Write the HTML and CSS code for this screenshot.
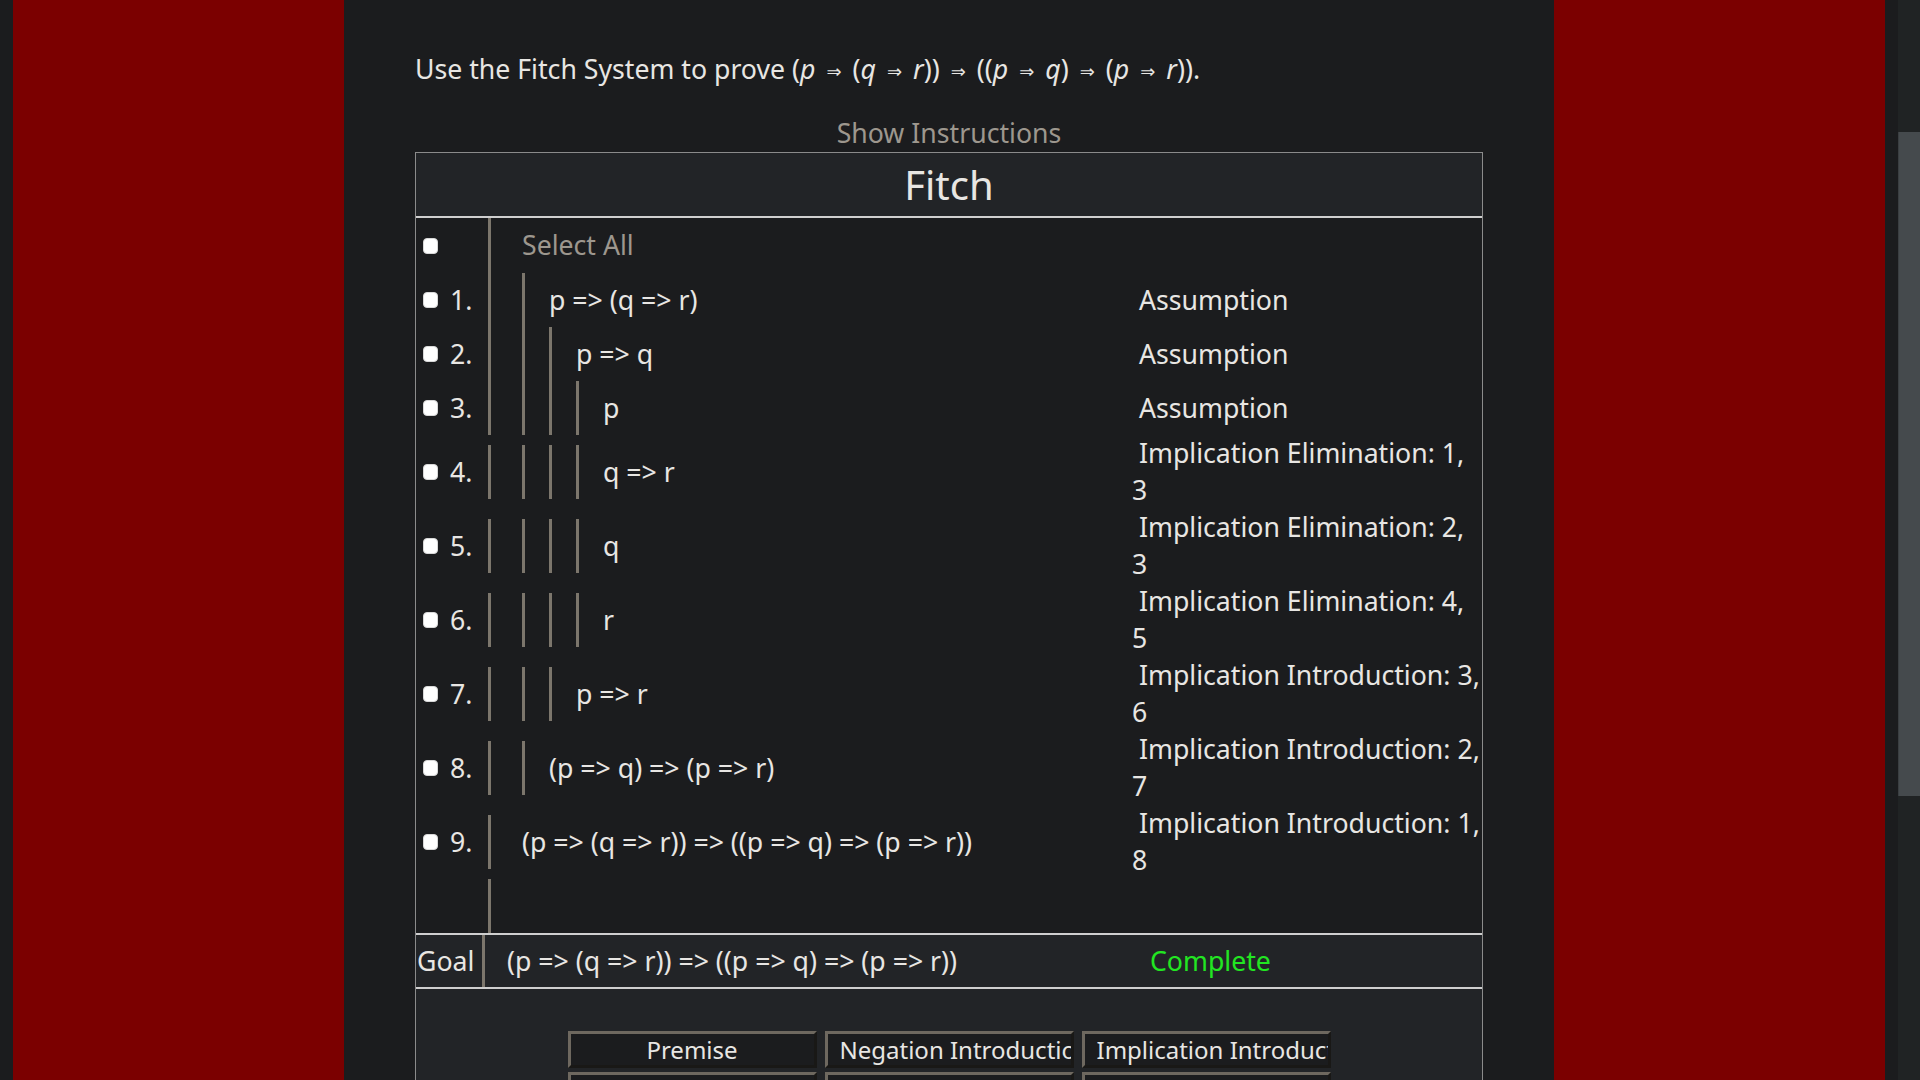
FILE: index.html
```html
<!DOCTYPE html>
<html lang="en">
<head>
<meta charset="utf-8">
<title>Fitch</title>
<link rel="stylesheet" href="styles.css">
</head>
<body>
<div class="page">
  <div class="side"></div>
  <main class="column">
    <p class="prompt">Use the Fitch System to prove (<i>p</i><span class="imp">⇒</span>(<i>q</i><span class="imp">⇒</span><i>r</i>))<span class="imp">⇒</span>((<i>p</i><span class="imp">⇒</span><i>q</i>)<span class="imp">⇒</span>(<i>p</i><span class="imp">⇒</span><i>r</i>)).</p>
    <div class="show">Show Instructions</div>
    <section class="fitch">
      <div class="fitch-head">Fitch</div>
      <div class="proof">
        <div class="line line-all">
          <div class="num"><input type="checkbox" class="cb"></div>
          <div class="formula"><span class="bar bar0"></span><span class="txt muted">Select All</span></div>
          <div class="rule"></div>
        </div>
        <div class="line">
          <div class="num"><input type="checkbox" class="cb"><span>1.</span></div>
          <div class="formula"><span class="bar bar0"></span><span class="bar"></span><span class="txt">p =&gt; (q =&gt; r)</span></div>
          <div class="rule"> Assumption</div>
        </div>
        <div class="line">
          <div class="num"><input type="checkbox" class="cb"><span>2.</span></div>
          <div class="formula"><span class="bar bar0"></span><span class="bar"></span><span class="bar"></span><span class="txt">p =&gt; q</span></div>
          <div class="rule"> Assumption</div>
        </div>
        <div class="line">
          <div class="num"><input type="checkbox" class="cb"><span>3.</span></div>
          <div class="formula"><span class="bar bar0"></span><span class="bar"></span><span class="bar"></span><span class="bar"></span><span class="txt">p</span></div>
          <div class="rule"> Assumption</div>
        </div>
        <div class="line">
          <div class="num"><input type="checkbox" class="cb"><span>4.</span></div>
          <div class="formula"><span class="bar bar0"></span><span class="bar"></span><span class="bar"></span><span class="bar"></span><span class="txt">q =&gt; r</span></div>
          <div class="rule"> Implication Elimination: 1,<br>3</div>
        </div>
        <div class="line">
          <div class="num"><input type="checkbox" class="cb"><span>5.</span></div>
          <div class="formula"><span class="bar bar0"></span><span class="bar"></span><span class="bar"></span><span class="bar"></span><span class="txt">q</span></div>
          <div class="rule"> Implication Elimination: 2,<br>3</div>
        </div>
        <div class="line">
          <div class="num"><input type="checkbox" class="cb"><span>6.</span></div>
          <div class="formula"><span class="bar bar0"></span><span class="bar"></span><span class="bar"></span><span class="bar"></span><span class="txt">r</span></div>
          <div class="rule"> Implication Elimination: 4,<br>5</div>
        </div>
        <div class="line">
          <div class="num"><input type="checkbox" class="cb"><span>7.</span></div>
          <div class="formula"><span class="bar bar0"></span><span class="bar"></span><span class="bar"></span><span class="txt">p =&gt; r</span></div>
          <div class="rule"> Implication Introduction: 3,<br>6</div>
        </div>
        <div class="line">
          <div class="num"><input type="checkbox" class="cb"><span>8.</span></div>
          <div class="formula"><span class="bar bar0"></span><span class="bar"></span><span class="txt">(p =&gt; q) =&gt; (p =&gt; r)</span></div>
          <div class="rule"> Implication Introduction: 2,<br>7</div>
        </div>
        <div class="line">
          <div class="num"><input type="checkbox" class="cb"><span>9.</span></div>
          <div class="formula"><span class="bar bar0"></span><span class="txt">(p =&gt; (q =&gt; r)) =&gt; ((p =&gt; q) =&gt; (p =&gt; r))</span></div>
          <div class="rule"> Implication Introduction: 1,<br>8</div>
        </div>
        <div class="line">
          <div class="num"></div>
          <div class="formula"><span class="bar bar0"></span></div>
          <div class="rule"></div>
        </div>
      </div>
      <div class="goal">
        <div class="goal-label">Goal</div>
        <div class="goal-formula">(p =&gt; (q =&gt; r)) =&gt; ((p =&gt; q) =&gt; (p =&gt; r))</div>
        <div class="goal-status">Complete</div>
      </div>
      <div class="tools">
        <div class="buttons">
          <button class="btn">Premise</button>
          <button class="btn">Negation Introduction</button>
          <button class="btn">Implication Introduction</button>
          <button class="btn">Assumption</button>
          <button class="btn">Negation Elimination</button>
          <button class="btn">Implication Elimination</button>
          <button class="btn">Reiteration</button>
          <button class="btn">Delete</button>
          <button class="btn">Check</button>
        </div>
      </div>
    </section>
  </main>
  <div class="side"></div>
</div>
<div class="scrollbar"><div class="thumb"></div></div>
</body>
</html>
```
FILE: styles.css
```css
html {
  background: #1b1c1e;
  scrollbar-width: none;
}
::-webkit-scrollbar {
  width: 0;
  height: 0;
}
body {
  margin: 0 35px 0 13px;
  background: #1b1c1e;
  color: #e8e6e3;
  font-family: "Noto Sans", "Open Sans", "DejaVu Sans", sans-serif;
  font-size: 26.667px;
  line-height: 37px;
}
.page {
  display: grid;
  grid-template-columns: 1fr 1210px 1fr;
  min-height: 1100px;
}
.side {
  background: #7b0000;
}
.column {
  background: #1b1c1e;
  padding: 51px 71px 40px;
}
.prompt {
  margin: 0 0 26px;
  height: 37px;
  line-height: 37px;
  white-space: nowrap;
}
.prompt i {
  font-style: italic;
}
.imp {
  font-family: "DejaVu Sans", sans-serif;
  font-size: 18px;
  line-height: 0;
  padding: 0 11px;
  vertical-align: 1px;
}
.show {
  text-align: center;
  color: #9d978e;
  line-height: 38px;
}
.fitch {
  border: 1px solid #8b8b8b;
  background: #1b1c1e;
}
.fitch-head {
  height: 63px;
  display: flex;
  align-items: center;
  justify-content: center;
  font-size: 40px;
  background: #222427;
  border-bottom: 2px solid #cfcfcf;
}
.line {
  display: grid;
  grid-template-columns: 72px 644px 350px;
  align-items: center;
  min-height: 54px;
}
.line-all {
  min-height: 55px;
}
.num {
  display: flex;
  align-items: center;
  padding-left: 7px;
  gap: 12px;
}
.cb {
  -webkit-appearance: none;
  appearance: none;
  width: 15px;
  height: 16px;
  margin: 0;
  background: #ffffff;
  border: 1px solid #d8d8d8;
  border-radius: 4px;
  flex: none;
}
.formula {
  display: flex;
  align-items: center;
  height: 54px;
}
.line-all .formula {
  height: 55px;
}
.bar {
  box-sizing: border-box;
  align-self: stretch;
  width: 27px;
  flex: none;
  border-left: 3px solid #7c766c;
}
.bar0 {
  width: 34px;
}
.txt {
  white-space: nowrap;
}
.muted {
  color: #9d978e;
}
.rule {
  white-space: pre;
  line-height: 37px;
}
.goal {
  display: grid;
  grid-template-columns: 69px 665px 332px;
  align-items: center;
  height: 52px;
  background: #222427;
  border-top: 2px solid #cfcfcf;
  border-bottom: 2px solid #cfcfcf;
}
.goal-label {
  height: 52px;
  line-height: 52px;
  border-right: 3px solid #7c766c;
  padding-left: 1px;
}
.goal-formula {
  padding-left: 22px;
  white-space: nowrap;
}
.goal-status {
  color: #22e622;
}
.tools {
  background: #222427;
  padding: 42px 0 80px;
}
.buttons {
  display: grid;
  grid-template-columns: repeat(3, 249px);
  justify-content: center;
  column-gap: 8px;
  row-gap: 4px;
}
.btn {
  height: 37px;
  padding: 0 12px;
  border: 3px outset #6e685f;
  background: #1b1c1e;
  color: #e8e6e3;
  font-family: "Noto Sans", "Open Sans", sans-serif;
  font-size: 24px;
  line-height: 31px;
  white-space: nowrap;
  overflow: hidden;
  text-align: center;
}
.scrollbar {
  position: fixed;
  top: 0;
  right: 0;
  width: 22px;
  height: 100vh;
  background: #202324;
}
.thumb {
  margin-top: 132px;
  height: 664px;
  background: #454a4d;
  border-left: 1px solid #3a3e41;
}
```
